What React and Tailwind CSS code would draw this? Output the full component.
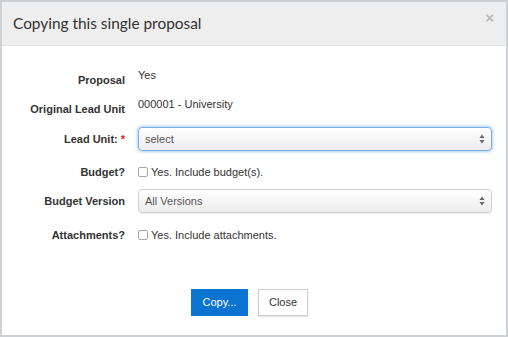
import { useState } from 'react';

const SANS = { fontFamily: '"Liberation Sans", Arial, sans-serif' };

function Row({ label, required, className = '', children }) {
  return (
    <div className={`flex h-[24px] items-center ${className}`}>
      <div className="w-[123px] shrink-0 text-right text-[11px] font-bold text-[#333]">
        {label}
        {required && <span className="ml-[3px] text-[#d9261c]">*</span>}
      </div>
      <div className="ml-[13px] flex min-w-0 flex-1 items-center pr-[14px]">{children}</div>
    </div>
  );
}

function Select({ value, focused }) {
  return (
    <div
      className={`flex h-[24px] w-full items-center justify-between rounded-[4px] border bg-gradient-to-b from-white to-[#ececec] pl-[6px] pr-[6px] text-[11px] text-[#555] ${
        focused ? 'border-[#79aee6] shadow-[0_0_3px_1px_rgba(102,170,235,0.55)]' : 'border-[#d0d0d0] shadow-[0_1px_1px_rgba(0,0,0,0.08)]'
      }`}
    >
      <span>{value}</span>
      <svg width="6" height="10" viewBox="0 0 6 10" className="text-[#666]">
        <path d="M3 0.5 L5.5 4 H0.5 Z M3 9.5 L5.5 6 H0.5 Z" fill="currentColor" />
      </svg>
    </div>
  );
}

function Check({ label }) {
  const [on, setOn] = useState(false);
  return (
    <label className="flex cursor-pointer items-center text-[11px] text-[#333]">
      <span
        onClick={() => setOn(!on)}
        className={`mr-[3px] inline-block h-[10px] w-[10px] rounded-[2px] border border-[#a8a8a8] ${on ? 'bg-[#0b73d0]' : 'bg-white'}`}
      />
      {label}
    </label>
  );
}

export default function App() {
  return (
    <div className="h-[337px] w-[508px] border-2 border-[#cdd1d4] bg-white" style={SANS}>
      <div className="relative flex h-[44px] items-center border-b border-[#e3e3e3] bg-[#eeeeee] pl-[11px]">
        <h1 className="text-[15.4px] text-[#333]" style={{ fontFamily: 'Lato, "Open Sans", sans-serif' }}>
          Copying this single proposal
        </h1>
        <span className="absolute right-[12px] top-[8px] text-[15px] font-bold leading-none text-[#b8b8b8]">×</span>
      </div>

      <div className="flex flex-col pt-[22px]">
        <Row label="Proposal">
          <span className="mb-[10px] text-[11px] text-[#333]">Yes</span>
        </Row>
        <Row label="Original Lead Unit" className="mt-[5px]">
          <span className="mb-[10px] text-[11px] text-[#333]">000001 - University</span>
        </Row>
        <Row label="Lead Unit:" required className="mt-[6px]">
          <Select value="select" focused />
        </Row>
        <Row label="Budget?" className="mt-[9px]">
          <Check label="Yes. Include budget(s)." />
        </Row>
        <Row label="Budget Version" className="mt-[5px]">
          <Select value="All Versions" />
        </Row>
        <Row label="Attachments?" className="mt-[10px]">
          <Check label="Yes. Include attachments." />
        </Row>

        <div className="mt-[42px] flex justify-center gap-[10px] pr-[9px]">
          <button className="h-[27px] w-[57px] bg-[#0b73d0] text-[11px] text-white">Copy...</button>
          <button className="h-[27px] w-[50px] border border-[#cfcfcf] bg-white text-[11px] text-[#333] shadow-[0_1px_1px_rgba(0,0,0,0.1)]">
            Close
          </button>
        </div>
      </div>
    </div>
  );
}
